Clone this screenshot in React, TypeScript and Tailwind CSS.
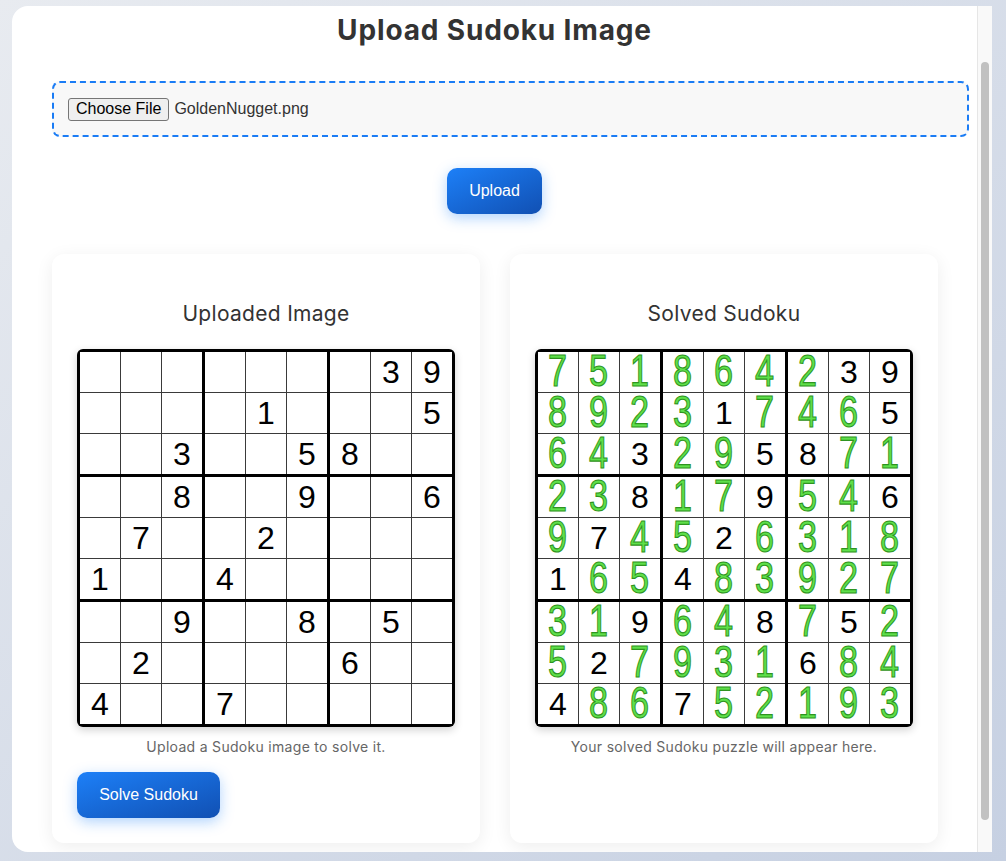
const puzzle = [
  "000000039",
  "000010005",
  "003005800",
  "008009006",
  "070020000",
  "100400000",
  "009008050",
  "020000600",
  "400700000",
];

const solution = [
  "751864239",
  "892317465",
  "643295871",
  "238179546",
  "974526318",
  "165483927",
  "319648752",
  "527931684",
  "486752193",
];

const sans = "font-['Liberation_Sans',Arial,sans-serif]";
const ui = "font-['Inter','Noto_Sans',sans-serif]";

function Cell({ value, given, solved }: { value: string; given: boolean; solved: boolean }) {
  if (value === "0") return <div className="w-[40px] h-[40px] bg-white" />;
  if (solved && !given) {
    return (
      <div className="w-[40px] h-[40px] bg-white flex items-center justify-center">
        <span
          className={`${sans} text-[38px] leading-[33px] text-[#5ee04a] [-webkit-text-stroke:1px_#2e9420] scale-x-[0.9] scale-y-[1.15] -translate-y-[1px]`}
        >
          {value}
        </span>
      </div>
    );
  }
  return (
    <div className="w-[40px] h-[40px] bg-white flex items-center justify-center">
      <span className={`${sans} text-[32px] leading-none text-black`}>{value}</span>
    </div>
  );
}

function SudokuGrid({ solved }: { solved: boolean }) {
  const rows = solved ? solution : puzzle;
  const boxes = [0, 1, 2, 3, 4, 5, 6, 7, 8];
  return (
    <div className="w-[378px] h-[378px] bg-black p-[3px] rounded-[6px] shadow-[0_3px_8px_rgba(0,0,0,0.18)] grid grid-cols-3 gap-[3px]">
      {boxes.map((b) => {
        const br = Math.floor(b / 3) * 3;
        const bc = (b % 3) * 3;
        return (
          <div key={b} className="bg-[#3a3a3a] grid grid-cols-3 gap-[1px]">
            {[0, 1, 2, 3, 4, 5, 6, 7, 8].map((i) => {
              const r = br + Math.floor(i / 3);
              const c = bc + (i % 3);
              const given = puzzle[r][c] !== "0";
              return <Cell key={i} value={rows[r][c]} given={given} solved={solved} />;
            })}
          </div>
        );
      })}
    </div>
  );
}

function GradientButton({ label, className }: { label: string; className: string }) {
  return (
    <button
      className={`${sans} ${className} rounded-[10px] bg-linear-to-br from-[#1d80f8] to-[#1150b3] text-white text-[16px] shadow-[0_4px_14px_rgba(30,128,248,0.35)]`}
    >
      {label}
    </button>
  );
}

export default function App() {
  return (
    <div className="w-full h-[861px] overflow-hidden bg-linear-to-br from-[#e8ebf0] to-[#c6d0e2] pt-[6px] pl-[12px]">
      <div className="w-[980px] h-[846px] bg-white rounded-l-2xl flex overflow-hidden">
        <div className="flex-1 flex flex-col">
          <h1 className={`${ui} text-[28px] leading-[36px] font-bold tracking-[0.85px] text-[#333] text-center mt-[6px]`}>
            Upload Sudoku Image
          </h1>

          <div className="mt-[33px] ml-[40px] mr-[8px] border-2 border-dashed border-[#1a7cf5] rounded-lg bg-[#f8f8f8] p-[14px] flex items-center gap-[5px]">
            <span
              className={`${sans} h-[23px] px-[7px] flex items-center bg-[#efefef] border border-[#767676] rounded-[3px] text-[16px] text-black`}
            >
              Choose File
            </span>
            <span className={`${sans} text-[16px] text-[#333]`}>GoldenNugget.png</span>
          </div>

          <GradientButton label="Upload" className="mt-[31px] mx-auto w-[95px] h-[46px]" />

          <div className="mt-[40px] ml-[40px] flex gap-[30px]">
            <div className="w-[428px] h-[589px] bg-white rounded-xl shadow-[0_4px_18px_rgba(0,0,0,0.07)] px-[25px] pt-[45px] flex flex-col">
              <h2 className={`${ui} text-[21px] leading-[30px] tracking-[0.3px] text-[#333] text-center`}>Uploaded Image</h2>
              <div className="mt-[20px]">
                <SudokuGrid solved={false} />
              </div>
              <p className={`${ui} mt-[9px] text-[14px] leading-[21px] tracking-[0.3px] text-[#666] text-center`}>
                Upload a Sudoku image to solve it.
              </p>
              <GradientButton label="Solve Sudoku" className="mt-[15px] w-[143px] h-[46px]" />
            </div>

            <div className="w-[428px] h-[589px] bg-white rounded-xl shadow-[0_4px_18px_rgba(0,0,0,0.07)] px-[25px] pt-[45px] flex flex-col">
              <h2 className={`${ui} text-[21px] leading-[30px] tracking-[0.3px] text-[#333] text-center`}>Solved Sudoku</h2>
              <div className="mt-[20px]">
                <SudokuGrid solved={true} />
              </div>
              <p className={`${ui} mt-[9px] text-[14px] leading-[21px] tracking-[0.3px] text-[#666] text-center`}>
                Your solved Sudoku puzzle will appear here.
              </p>
            </div>
          </div>
        </div>

        <div className="w-[15px] h-full bg-[#f9f9f9] border-l border-[#e6e6e6] pl-[3px] pt-[56px]">
          <div className="w-[8px] h-[758px] rounded-full bg-[#c1c1c1]" />
        </div>
      </div>
    </div>
  );
}
